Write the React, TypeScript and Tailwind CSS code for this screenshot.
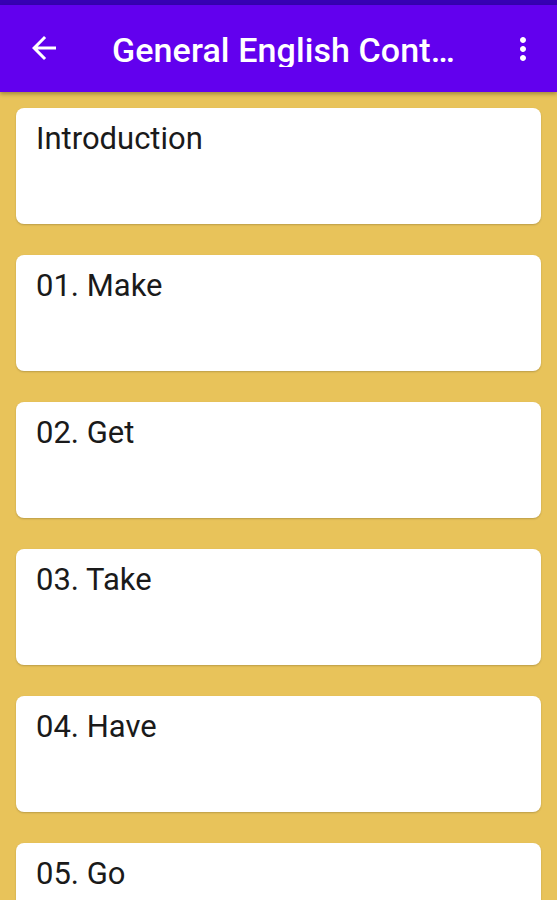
const items = [
  "Introduction",
  "01. Make",
  "02. Get",
  "03. Take",
  "04. Have",
  "05. Go",
  "06. Do",
];

export default function App() {
  return (
    <div
      className="w-[557px] h-[900px] overflow-hidden bg-[#e8c35a] flex flex-col"
      style={{ fontFamily: "Roboto, 'Noto Sans', sans-serif" }}
    >
      <div className="h-[5px] bg-[#3700b3] shrink-0" />
      <div className="h-[87px] shrink-0 bg-[#6200ee] flex items-center shadow-[0_2px_4px_rgba(0,0,0,0.3)] relative z-10">
        <svg
          width="36"
          height="36"
          viewBox="0 0 24 24"
          className="ml-[26px] mt-[-1px] shrink-0"
          fill="#ffffff"
        >
          <path d="M20 11H7.83l5.59-5.59L12 4l-8 8 8 8 1.41-1.41L7.83 13H20v-2z" />
        </svg>
        <div className="ml-[50px] flex-1 min-w-0 truncate text-white text-[34px] font-medium tracking-[0.1px] leading-none pt-[2px]">
          General English Contents
        </div>
        <svg
          width="36"
          height="36"
          viewBox="0 0 24 24"
          className="ml-[46px] mr-[16px] shrink-0"
          fill="#ffffff"
        >
          <path d="M12 8c1.1 0 2-.9 2-2s-.9-2-2-2-2 .9-2 2 .9 2 2 2zm0 2c-1.1 0-2 .9-2 2s.9 2 2 2 2-.9 2-2-.9-2-2-2zm0 6c-1.1 0-2 .9-2 2s.9 2 2 2 2-.9 2-2-.9-2-2-2z" />
        </svg>
      </div>
      <div className="flex flex-col gap-[31px] px-[16px] pt-[16px]">
        {items.map((t) => (
          <div
            key={t}
            className="h-[116px] shrink-0 bg-white rounded-[8px] shadow-[0_1px_2px_rgba(0,0,0,0.2)] px-[20px] pt-[8px] text-[31px] text-[#1a1a1a]"
          >
            {t}
          </div>
        ))}
      </div>
    </div>
  );
}
